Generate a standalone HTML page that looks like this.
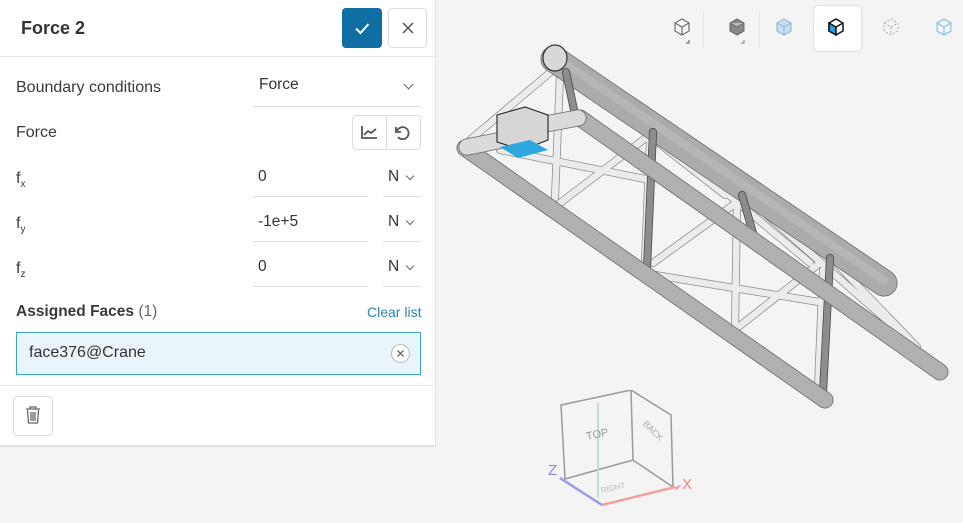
<!DOCTYPE html>
<html><head><meta charset="utf-8"><style>
*{box-sizing:border-box;margin:0;padding:0}
body{width:963px;height:523px;background:#f4f4f4;font-family:"Liberation Sans",sans-serif;position:relative;overflow:hidden;color:#333}
.panel{position:absolute;left:0;top:0;width:436px;height:447px;background:#fff;border-right:1px solid #e2e2e2;border-bottom:2px solid #e2e2e2}
.abs{position:absolute}
.lbl{position:absolute;left:16px;font-size:16px;color:#3a3a3a}
.inp{position:absolute;border-bottom:1px solid #ddd;font-size:15.5px;color:#333}
.chev{position:absolute;width:7px;height:7px;border-right:1.3px solid #666;border-bottom:1.3px solid #666;transform:rotate(45deg)}
</style></head><body>
<div class="panel">
 <div class="abs" style="left:21px;top:18px;font-size:18px;font-weight:bold;color:#333">Force 2</div>
 <div class="abs" style="left:342px;top:8px;width:40px;height:40px;background:#0f6fa5;border-radius:4px">
  <svg width="40" height="40"><path d="M14 20.5l4.5 4.5 8-9" stroke="#fff" stroke-width="2" fill="none"/></svg></div>
 <div class="abs" style="left:388px;top:8px;width:39px;height:40px;border:1px solid #ddd;border-radius:4px">
  <svg width="38" height="38"><path d="M14 14l10 10M24 14l-10 10" stroke="#555" stroke-width="1.5"/></svg></div>
 <div class="abs" style="left:0;top:56px;width:436px;height:1px;background:#e5e5e5"></div>
 <div class="lbl" style="top:79px">Boundary conditions</div>
 <div class="inp" style="left:253px;top:76px;width:168px;height:31px;padding-left:6px">Force</div>
 <div class="chev" style="left:405px;top:81px"></div>
 <div class="lbl" style="top:124px">Force</div>
 <div class="abs" style="left:352px;top:115px;width:69px;height:35px;border:1px solid #ddd;border-radius:4px"></div>
 <div class="abs" style="left:386px;top:116px;width:1px;height:33px;background:#ddd"></div>
 <svg class="abs" style="left:352px;top:115px" width="69" height="35"><path d="M10 11v12h15" stroke="#555" stroke-width="1.8" fill="none"/><path d="M12 20l4-4 3 2 5-4" stroke="#555" stroke-width="1.8" fill="none"/><path d="M44 12v5h5" stroke="#555" stroke-width="1.8" fill="none"/><path d="M45 16a6 6 0 1 1 1 6" stroke="#555" stroke-width="1.8" fill="none"/></svg>
 <div class="lbl" style="top:170px">f<sub style="font-size:10px">x</sub></div>
 <div class="inp" style="left:253px;top:168px;width:115px;height:29px;padding-left:5px">0</div>
 <div class="inp" style="left:383px;top:168px;width:38px;height:29px;padding-left:5px">N</div><div class="chev" style="left:407px;top:173px;width:6px;height:6px"></div>
 <div class="lbl" style="top:215px">f<sub style="font-size:10px">y</sub></div>
 <div class="inp" style="left:253px;top:213px;width:115px;height:29px;padding-left:5px">-1e+5</div>
 <div class="inp" style="left:383px;top:213px;width:38px;height:29px;padding-left:5px">N</div><div class="chev" style="left:407px;top:218px;width:6px;height:6px"></div>
 <div class="lbl" style="top:260px">f<sub style="font-size:10px">z</sub></div>
 <div class="inp" style="left:253px;top:258px;width:115px;height:29px;padding-left:5px">0</div>
 <div class="inp" style="left:383px;top:258px;width:38px;height:29px;padding-left:5px">N</div><div class="chev" style="left:407px;top:263px;width:6px;height:6px"></div>
 <div class="lbl" style="top:303px;font-weight:bold;font-size:15.5px">Assigned Faces <span style="font-weight:normal;color:#666">(1)</span></div>
 <div class="abs" style="left:367px;top:304px;font-size:14px;color:#2a84b5">Clear list</div>
 <div class="abs" style="left:16px;top:332px;width:405px;height:43px;background:#e8f5fb;border:1px solid #3aa3cf;padding:11px 0 0 12px;font-size:16px">face376@Crane</div>
 <div class="abs" style="left:391px;top:344px;width:19px;height:19px;border:1px solid #bbb;border-radius:50%;background:#fff">
  <svg width="17" height="17"><path d="M5.5 5.5l6 6M11.5 5.5l-6 6" stroke="#555" stroke-width="1.2"/></svg></div>
 <div class="abs" style="left:0;top:385px;width:436px;height:1px;background:#e5e5e5"></div>
 <div class="abs" style="left:13px;top:396px;width:40px;height:40px;border:1px solid #ddd;border-radius:4px">
  <svg width="38" height="38"><path d="M12 12h14M16 12v-2h6v2M13.5 13l1 13h9l1-13M17 15v9M19 15v9M21 15v9" stroke="#666" stroke-width="1.3" fill="none"/></svg></div>
</div>

<div class="abs" style="left:813px;top:5px;width:49px;height:47px;background:#fff;border:1px solid #dde;border-radius:5px"></div>
<div class="abs" style="left:703px;top:12px;width:1px;height:36px;background:#e5e5e5"></div>
<div class="abs" style="left:759px;top:12px;width:1px;height:36px;background:#e5e5e5"></div>
<svg class="abs" style="left:640px;top:0" width="323" height="60">
 <g fill="none" stroke="#555" stroke-width="1"><path d="M35 23l7-4 7 4v8l-7 4-7-4z M35 23l7 4 7-4 M42 27v8"/><path d="M49 40v3h-3"/></g>
 <path d="M90 23l7-4 7 4v8l-7 4-7-4z" fill="#888" stroke="#666"/><path d="M90 23l7 4 7-4" fill="#bbb" stroke="#666"/><path d="M104 40v3h-3" stroke="#777" fill="none"/>
 <path d="M137 23l7-4 7 4v8l-7 4-7-4z" fill="#bfe3f3" stroke="#9ac"/><path d="M137 23l7 4 7-4M144 27v8" stroke="#9ac" fill="none"/>
 <path d="M189 23l7-4 7 4v8l-7 4-7-4z" fill="#fff" stroke="#111" stroke-width="1.5"/><path d="M189 23l7 4v8l-7-4z" fill="#2a9fd6" stroke="#111" stroke-width="1.5"/><path d="M196 27l7-4" stroke="#111" stroke-width="1.5"/>
 <g stroke="#9ab" stroke-dasharray="2 2" fill="none"><path d="M244 23l7-4 7 4v8l-7 4-7-4z M244 23l7 4 7-4 M251 27v8"/></g>
 <path d="M297 23l7-4 7 4v8l-7 4-7-4z M297 23l7 4 7-4 M304 27v8" stroke="#8cc8e0" fill="none" stroke-width="1.3"/>
</svg>

<svg class="abs" style="left:0;top:0" width="963" height="523">
 <g stroke-linecap="round" fill="none">
  <g stroke="#8a8a8a" stroke-width="8"><path d="M470 140L553 70M560 75L555 198M572 75L725 195M500 150L650 180M560 203L647 137M650 140L645 262M663 140L810 263M655 275L825 303M653 263L740 200M737 205L735 328M752 202L915 345M737 328L820 263M823 270L818 388M838 265L917 347"/></g>
  <g stroke="#ebebeb" stroke-width="6.5"><path d="M470 140L553 70M560 75L555 198M572 75L725 195M500 150L650 180M560 203L647 137M650 140L645 262M663 140L810 263M655 275L825 303M653 263L740 200M737 205L735 328M752 202L915 345M737 328L820 263M823 270L818 388M838 265L917 347"/></g>
  <path d="M554 59L884 283" stroke="#666" stroke-width="27"/><path d="M554 59L884 283" stroke="#ababab" stroke-width="25.5"/>
  <path d="M566 64L884 280" stroke="#b6b6b6" stroke-width="8"/>
  <g stroke="#444" stroke-width="8"><path d="M566 72L574 110M653 132L647 268M742 195L753 233M830 258L823 393"/></g>
  <g stroke="#8d8d8d" stroke-width="6.5"><path d="M566 72L574 110M653 132L647 268M742 195L753 233M830 258L823 393"/></g>
  <path d="M465 148L825 400" stroke="#666" stroke-width="17"/><path d="M465 148L825 400" stroke="#b0b0b0" stroke-width="15.5"/>
  <path d="M580 118L940 372" stroke="#666" stroke-width="17"/><path d="M580 118L940 372" stroke="#b0b0b0" stroke-width="15.5"/>
  <path d="M467 147L502 140M540 125L578 118" stroke="#666" stroke-width="17"/><path d="M467 147L502 140M540 125L578 118" stroke="#dadada" stroke-width="15.5"/>
 </g>
 <ellipse cx="555" cy="58" rx="12" ry="13" fill="#d8d8d8" stroke="#333" stroke-width="1.2"/>
 <path d="M497 115l28-8 23 8v25l-26 10-25-8z" fill="#d6d6d6" stroke="#222" stroke-width="1.1"/>
 <path d="M525 107v0M497 115l0 0" stroke="#222"/>
 <path d="M500 147l30-7 18 10-30 8z" fill="#2ea7e0"/>
</svg>

<svg class="abs" style="left:530px;top:390px" width="180" height="133">
 <g stroke="#999" stroke-width="1.5" fill="none">
  <path d="M31 15L101 0L103 70L35 89Z"/><path d="M101 0L141 25L143 97L103 70"/>
 </g>
 <path d="M68 13V108" stroke="#bfe2bf" stroke-width="2"/>
 <path d="M72 115L145 97" stroke="#f0a0a0" stroke-width="2.5"/><path d="M145 97l7-3-6 7z" fill="#f0a0a0"/>
 <path d="M72 115L30 88" stroke="#9a9ae8" stroke-width="2.5"/>
 <text x="152" y="99" font-size="15" fill="#f08080" font-family="Liberation Sans">X</text>
 <text x="18" y="85" font-size="15" fill="#8888e8" font-family="Liberation Sans">Z</text>
 <text x="56" y="48" font-size="11" fill="#999" font-family="Liberation Sans" transform="rotate(-12 66 44)">TOP</text>
 <text x="110" y="40" font-size="9" fill="#aaa" font-family="Liberation Sans" transform="rotate(45 118 40)">BACK</text>
 <text x="70" y="100" font-size="8" fill="#bbb" font-family="Liberation Sans" transform="rotate(-12 85 95)">RIGHT</text>
</svg>
</body></html>
